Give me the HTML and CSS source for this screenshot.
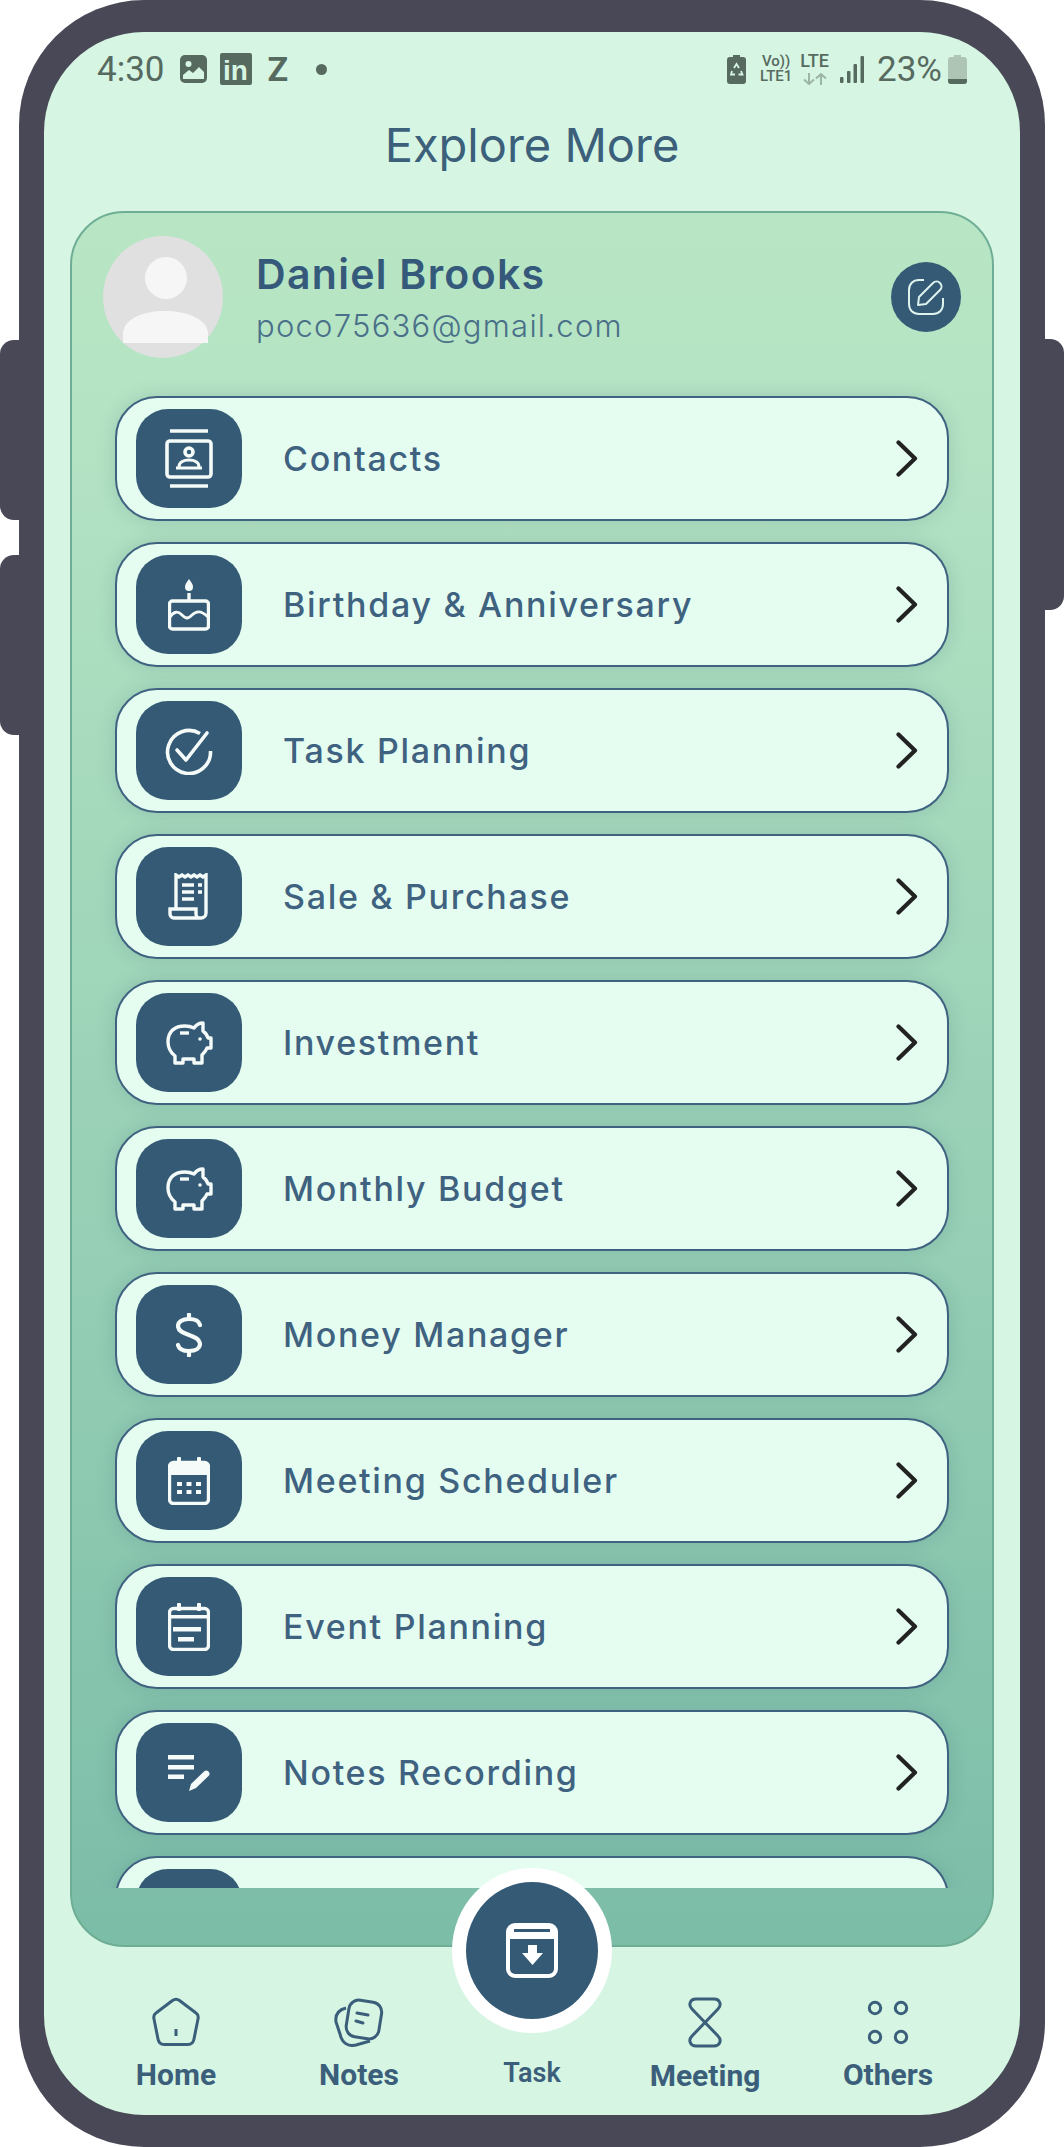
FILE: index.html
```html
<!DOCTYPE html>
<html>
<head>
    <title>Explore More</title>
    <meta charset="utf-8">
    <link rel="stylesheet" href="styles.css">
</head>
<body>
<div class="device">
    <span class="side-btn left-one"></span>
    <span class="side-btn left-two"></span>
    <span class="side-btn right-one"></span>

    <div class="screen">
        <div class="status">
            <div class="status-group">
                <span class="clock">4:30</span>
                <svg class="st-image" width="27" height="28" viewBox="0 0 27 28"><rect width="27" height="28" rx="5" fill="#566a5f"/><circle cx="8.5" cy="9" r="3" fill="#d6f5e3"/><path d="M3 24v-4l6-5 4 3 6-6 5 5v7z" fill="#d6f5e3"/></svg>
                <span class="st-linkedin">in</span>
                <span class="st-z">Z</span>
                <span class="st-dot"></span>
            </div>
            <div class="status-group">
                <svg class="st-battery-saver" width="19" height="29" viewBox="0 0 19 29"><path d="M6 0h7v2h3a3 3 0 0 1 3 3v21a3 3 0 0 1-3 3H3a3 3 0 0 1-3-3V5a3 3 0 0 1 3-3h3z" fill="#566a5f"/><path d="M7 13l2.500-4 2.500 4M14 16l1.500 3.500h-4M5 16l-1 3.500h4" stroke="#d6f5e3" stroke-width="1.800" fill="none"/></svg>
                <div class="st-stack volte"><span>Vo))</span><span>LTE1</span></div>
                <div class="st-stack lte">
                    <span>LTE</span>
                    <svg class="st-arrows" width="26" height="12" viewBox="0 0 26 12" fill="none" stroke="#9db5a7" stroke-width="2"><path d="M7 0V11M2 6.500L7 11L12 6.500M19 12V1M14 5.500L19 1L24 5.500"/></svg>
                </div>
                <svg class="st-signal" width="24" height="27" viewBox="0 0 24 27"><rect x="0" y="21" width="3.500" height="6" rx="1" fill="#566a5f"/><rect x="7" y="15" width="3.500" height="12" rx="1" fill="#566a5f"/><rect x="13.500" y="8" width="3.500" height="19" rx="1" fill="#566a5f"/><rect x="20.500" y="0" width="3.500" height="27" rx="1" fill="#566a5f"/></svg>
                <span class="percent">23%</span>
                <svg class="st-battery" width="19" height="29" viewBox="0 0 19 29"><path d="M6 0h7v2h3a3 3 0 0 1 3 3v21a3 3 0 0 1-3 3H3a3 3 0 0 1-3-3V5a3 3 0 0 1 3-3h3z" fill="#aec5b5"/><path d="M0 24h19v2a3 3 0 0 1-3 3H3a3 3 0 0 1-3-3z" fill="#566a5f"/></svg>
            </div>
        </div>

        <h1 class="title">Explore More</h1>

        <div class="card">
            <div class="profile">
                <svg class="avatar" width="120" height="122" viewBox="0 0 120 122">
                    <ellipse cx="60" cy="61" rx="60" ry="61" fill="#e0e0e0"/>
                    <circle cx="63" cy="42" r="21" fill="#f6f6f6"/>
                    <path d="M20 107V98C20 83 40 75 62 75S105 83 105 98V107Z" fill="#f6f6f6"/>
                </svg>
                <div class="profile-text">
                    <div class="name">Daniel Brooks</div>
                    <div class="email">poco75636@gmail.com</div>
                </div>
                <div class="edit-btn">
                    <svg width="38" height="38" viewBox="0 0 38 38" fill="none" stroke="#dff3ee" stroke-width="2"><path d="M17 2H12C6 2 2 6 2 12V26C2 32 6 36 12 36H26C32 36 36 32 36 26V20"/><path d="M11 27L12 19L26 5C28 3 31 3 33 5C35 7 35 10 33 12L19 26Z" stroke-linejoin="round"/></svg>
                </div>
            </div>

            <div class="menu">
                <div class="row">
                    <div class="row-icon">
                        <svg width="48" height="60" viewBox="0 0 48 60" fill="none" stroke="#f4fbf8" stroke-width="3.600"><path d="M5 2H43M5 57H43"/><rect x="2" y="12" width="44" height="36" rx="3"/><circle cx="24" cy="23" r="4"/><path d="M11 39H37M14 38C14 33 19 31 24 31S34 33 34 38" stroke-width="3"/></svg>
                    </div>
                    <span class="row-label">Contacts</span>
                    <svg class="chev" width="22" height="37" viewBox="0 0 22 37"><path d="M2.500 2.500L19 18.500L2.500 34.500" fill="none" stroke="#222" stroke-width="4.200" stroke-linecap="round" stroke-linejoin="round"/></svg>
                </div>
                <div class="row">
                    <div class="row-icon">
                        <svg width="42" height="52" viewBox="0 0 42 52" fill="none" stroke="#f4fbf8" stroke-width="3.400"><path d="M21 0C18 4 17 6 17 8A4 4 0 0 0 25 8C25 6 24 4 21 0Z" fill="#f4fbf8" stroke="none"/><path d="M21 14V22"/><rect x="1.500" y="22" width="39" height="28" rx="3"/><path d="M2 38C6 32 10 32 14 36S20 40 24 36S33 31 40 38" stroke-width="2.800"/></svg>
                    </div>
                    <span class="row-label">Birthday &amp; Anniversary</span>
                    <svg class="chev" width="22" height="37" viewBox="0 0 22 37"><path d="M2.500 2.500L19 18.500L2.500 34.500" fill="none" stroke="#222" stroke-width="4.200" stroke-linecap="round" stroke-linejoin="round"/></svg>
                </div>
                <div class="row">
                    <div class="row-icon">
                        <svg width="48" height="48" viewBox="0 0 48 48" fill="none" stroke="#f4fbf8" stroke-width="3.600"><path d="M35 6.500A21.500 21.500 0 1 0 45.500 24"/><path d="M12 23L21 33L42 6" stroke-linecap="round" stroke-linejoin="round"/></svg>
                    </div>
                    <span class="row-label">Task Planning</span>
                    <svg class="chev" width="22" height="37" viewBox="0 0 22 37"><path d="M2.500 2.500L19 18.500L2.500 34.500" fill="none" stroke="#222" stroke-width="4.200" stroke-linecap="round" stroke-linejoin="round"/></svg>
                </div>
                <div class="row">
                    <div class="row-icon">
                        <svg width="42" height="48" viewBox="0 0 42 48" fill="none" stroke="#f4fbf8" stroke-width="3.400"><path d="M8 35V2L11 4L14 2L17 4L20 2L23 4L26 2L29 4L32 2L35 4L38 2V40A5 5 0 0 1 33 45H6A4 4 0 0 1 2 41V36H28V41A4 4 0 0 0 33 45"/><path d="M14 12H26M14 19H26M14 26H26"/><path d="M30 12H34M30 19H34" stroke-dasharray="4 3"/></svg>
                    </div>
                    <span class="row-label">Sale &amp; Purchase</span>
                    <svg class="chev" width="22" height="37" viewBox="0 0 22 37"><path d="M2.500 2.500L19 18.500L2.500 34.500" fill="none" stroke="#222" stroke-width="4.200" stroke-linecap="round" stroke-linejoin="round"/></svg>
                </div>
                <div class="row">
                    <div class="row-icon">
                        <svg width="48" height="46" viewBox="0 0 48 46" fill="none" stroke="#f4fbf8" stroke-width="3.400" stroke-linejoin="round"><path d="M3 22C3 11 10 6 20 6C24 6 27 7 29 8C31 5 35 3 38 3V11C41 13 42 15 43 18H46V28H42C41 31 39 33 37 35V43H29V39H18V43H10V36C5 32 3 28 3 22Z"/><path d="M15 13H24"/><circle cx="35" cy="19" r="1.800" fill="#f4fbf8" stroke="none"/></svg>
                    </div>
                    <span class="row-label">Investment</span>
                    <svg class="chev" width="22" height="37" viewBox="0 0 22 37"><path d="M2.500 2.500L19 18.500L2.500 34.500" fill="none" stroke="#222" stroke-width="4.200" stroke-linecap="round" stroke-linejoin="round"/></svg>
                </div>
                <div class="row">
                    <div class="row-icon">
                        <svg width="48" height="46" viewBox="0 0 48 46" fill="none" stroke="#f4fbf8" stroke-width="3.400" stroke-linejoin="round"><path d="M3 22C3 11 10 6 20 6C24 6 27 7 29 8C31 5 35 3 38 3V11C41 13 42 15 43 18H46V28H42C41 31 39 33 37 35V43H29V39H18V43H10V36C5 32 3 28 3 22Z"/><path d="M15 13H24"/><circle cx="35" cy="19" r="1.800" fill="#f4fbf8" stroke="none"/></svg>
                    </div>
                    <span class="row-label">Monthly Budget</span>
                    <svg class="chev" width="22" height="37" viewBox="0 0 22 37"><path d="M2.500 2.500L19 18.500L2.500 34.500" fill="none" stroke="#222" stroke-width="4.200" stroke-linecap="round" stroke-linejoin="round"/></svg>
                </div>
                <div class="row">
                    <div class="row-icon">
                        <svg width="26" height="44" viewBox="0 0 26 44" fill="none" stroke="#f4fbf8" stroke-width="4.200" stroke-linecap="round"><path d="M13 1.500V6M13 38V42.500"/><path d="M24 12C23 8 19 6 13 6C6 6 2 9 2 13C2 18 7 20 13 22C19 24 24 26 24 31C24 35 20 38 13 38C7 38 3 36 2 32"/></svg>
                    </div>
                    <span class="row-label">Money Manager</span>
                    <svg class="chev" width="22" height="37" viewBox="0 0 22 37"><path d="M2.500 2.500L19 18.500L2.500 34.500" fill="none" stroke="#222" stroke-width="4.200" stroke-linecap="round" stroke-linejoin="round"/></svg>
                </div>
                <div class="row">
                    <div class="row-icon">
                        <svg width="42" height="48" viewBox="0 0 42 48" fill="#f4fbf8"><rect x="9" y="0" width="4" height="8" rx="1"/><rect x="29" y="0" width="4" height="8" rx="1"/><rect x="1.500" y="5.500" width="39" height="41" rx="4" fill="none" stroke="#f4fbf8" stroke-width="3.400"/><rect x="2" y="6" width="38" height="12"/><rect x="9" y="25" width="5" height="4"/><rect x="18.500" y="25" width="5" height="4"/><rect x="28" y="25" width="5" height="4"/><rect x="9" y="33" width="5" height="4"/><rect x="18.500" y="33" width="5" height="4"/><rect x="28" y="33" width="5" height="4"/></svg>
                    </div>
                    <span class="row-label">Meeting Scheduler</span>
                    <svg class="chev" width="22" height="37" viewBox="0 0 22 37"><path d="M2.500 2.500L19 18.500L2.500 34.500" fill="none" stroke="#222" stroke-width="4.200" stroke-linecap="round" stroke-linejoin="round"/></svg>
                </div>
                <div class="row">
                    <div class="row-icon">
                        <svg width="42" height="48" viewBox="0 0 42 48" fill="#f4fbf8"><rect x="9" y="0" width="4" height="8" rx="1"/><rect x="29" y="0" width="4" height="8" rx="1"/><rect x="1.500" y="5.500" width="39" height="41" rx="4" fill="none" stroke="#f4fbf8" stroke-width="3.400"/><rect x="2" y="12" width="38" height="3.500"/><rect x="5" y="24" width="28" height="4.500"/><rect x="10" y="34" width="16" height="4.500"/></svg>
                    </div>
                    <span class="row-label">Event Planning</span>
                    <svg class="chev" width="22" height="37" viewBox="0 0 22 37"><path d="M2.500 2.500L19 18.500L2.500 34.500" fill="none" stroke="#222" stroke-width="4.200" stroke-linecap="round" stroke-linejoin="round"/></svg>
                </div>
                <div class="row">
                    <div class="row-icon">
                        <svg width="44" height="38" viewBox="0 0 44 38" fill="#f4fbf8"><rect x="1" y="1" width="26" height="4.500"/><rect x="1" y="11" width="26" height="4.500"/><rect x="1" y="20.500" width="16" height="4.500"/><path d="M22 37L24 30L37 17.500C38.500 16 40 16 41.500 17.500C43 19 43 20.500 41.500 22L29 34Z"/></svg>
                    </div>
                    <span class="row-label">Notes Recording</span>
                    <svg class="chev" width="22" height="37" viewBox="0 0 22 37"><path d="M2.500 2.500L19 18.500L2.500 34.500" fill="none" stroke="#222" stroke-width="4.200" stroke-linecap="round" stroke-linejoin="round"/></svg>
                </div>
                <div class="row">
                    <div class="row-icon"></div>
                </div>
            </div>
        </div>

        <div class="nav">
            <div class="nav-item">
                <svg width="50" height="50" viewBox="0 0 50 50" fill="none" stroke="#3b5f7a" stroke-width="3"><path d="M21.500 3.500Q25 1 28.500 3.500L45 16Q48 18 47 22L43 42Q42 47.500 37 47.500H13Q8 47.500 7 42L3 22Q2 18 5 16Z"/><path d="M25 32V39"/></svg>
                <span>Home</span>
            </div>
            <div class="nav-item">
                <svg width="50" height="50" viewBox="0 0 50 50" fill="none" stroke="#3b5f7a" stroke-width="3"><rect x="13.500" y="4" width="33" height="37" rx="10" transform="rotate(9 30 22)"/><path d="M12 11C4 13 1 18 2 25L6 37C8 46 14 50 22 48L36 44"/><path d="M23 16L34 18M22 24L29 26" stroke-linecap="round"/></svg>
                <span>Notes</span>
            </div>
            <div class="nav-item nav-task">
                <div class="fab">
                    <svg width="52" height="55" viewBox="0 0 52 55"><rect x="2" y="2" width="48" height="51" rx="7" fill="none" stroke="#fff" stroke-width="4"/><rect x="2" y="4" width="48" height="12" fill="#fff"/><rect x="8" y="6" width="36" height="3" fill="#355a76"/><path d="M22 22H31V30H37L26.500 42L16 30H22Z" fill="#fff"/></svg>
                </div>
                <span>Task</span>
            </div>
            <div class="nav-item">
                <svg width="34" height="51" viewBox="0 0 34 51" fill="none" stroke="#3b5f7a" stroke-width="3"><path d="M8 2H26C32 2 34 8 30 12L4 39C0 43 2 49 8 49H26C32 49 34 43 30 39L4 12C0 8 2 2 8 2Z"/></svg>
                <span>Meeting</span>
            </div>
            <div class="nav-item">
                <svg width="50" height="50" viewBox="0 0 50 50" fill="none" stroke="#3b5f7a" stroke-width="3"><circle cx="12" cy="11" r="5.700"/><circle cx="38" cy="11" r="5.700"/><circle cx="12" cy="40" r="5.700"/><circle cx="38" cy="40" r="5.700"/></svg>
                <span>Others</span>
            </div>
        </div>
    </div>
</div>
</body>
</html>
```

FILE: styles.css
```css
html, body {
    margin: 0;
    padding: 0;
    background: #fff;
}
body {
    width: 1064px;
    height: 2147px;
    overflow: hidden;
    font-family: "Inter", "Liberation Sans", sans-serif;
}

.device {
    position: relative;
    box-sizing: border-box;
    width: 1026px;
    height: 2147px;
    margin-left: 19px;
    padding: 32px 25px;
    background: #494857;
    border-radius: 125px;
}
.side-btn {
    position: absolute;
    width: 30px;
    background: #494857;
}
.left-one {
    left: -19px;
    top: 340px;
    height: 180px;
    border-radius: 14px 0 0 14px;
}
.left-two {
    left: -19px;
    top: 555px;
    height: 180px;
    border-radius: 14px 0 0 14px;
}
.right-one {
    right: -19px;
    top: 339px;
    height: 271px;
    border-radius: 0 14px 14px 0;
}

.screen {
    display: flex;
    flex-direction: column;
    height: 2083px;
    background: #d6f5e3;
    border-radius: 100px;
    overflow: hidden;
}

/* status bar */
.status {
    display: flex;
    justify-content: space-between;
    height: 36px;
    margin-top: 19px;
    padding: 0 53px;
    color: #566a5f;
    font-family: "Roboto", sans-serif;
}
.status-group {
    display: flex;
    align-items: center;
}
.clock {
    font-size: 35px;
    margin-right: 15px;
}
.st-linkedin {
    width: 32px;
    height: 32px;
    margin-left: 13px;
    background: #566a5f;
    color: #d6f5e3;
    font: bold 28px/36px "Liberation Sans", sans-serif;
    text-align: center;
    border-radius: 2px;
}
.st-z {
    margin-left: 16px;
    font-size: 34px;
    font-weight: 700;
}
.st-dot {
    width: 11px;
    height: 11px;
    margin-left: 28px;
    background: #566a5f;
    border-radius: 50%;
}
.st-stack {
    display: flex;
    flex-direction: column;
    align-items: center;
    font-size: 15px;
    font-weight: 500;
    line-height: 15px;
}
.volte {
    margin-left: 14px;
}
.lte {
    gap: 4px;
    margin-left: 8px;
    font-size: 18px;
    line-height: 16px;
}
.st-signal {
    margin-left: 11px;
}
.percent {
    margin-left: 13px;
    margin-right: 6px;
    font-size: 35px;
}

.title {
    margin: 28px 0 36px;
    color: #3c5f7a;
    font-size: 47px;
    font-weight: 400;
    line-height: 60px;
    text-align: center;
}

/* main card */
.card {
    box-sizing: border-box;
    display: flex;
    flex-direction: column;
    flex: none;
    width: 924px;
    height: 1736px;
    margin-left: 26px;
    padding-top: 23px;
    padding-bottom: 57px;
    background: linear-gradient(#b8e6c4, #b5e4c4 10%, #7cbda8);
    border: 2px solid #6fae96;
    border-radius: 54px;
}
.profile {
    display: flex;
    align-items: center;
    padding: 0 31px;
}
.avatar {
    flex: none;
}
.profile-text {
    margin-left: 33px;
}
.name {
    color: #35597a;
    font-size: 41px;
    font-weight: 600;
    line-height: 50px;
    letter-spacing: 1.3px;
}
.email {
    margin-top: 7px;
    color: #4a7089;
    font-size: 31px;
    font-weight: 300;
    line-height: 40px;
    letter-spacing: 1.25px;
}
.edit-btn {
    display: flex;
    align-items: center;
    justify-content: center;
    width: 70px;
    height: 70px;
    margin-left: auto;
    background: #355a76;
    border-radius: 50%;
}

.menu {
    display: flex;
    flex: 1;
    flex-direction: column;
    gap: 21px;
    margin-top: 19px;
    padding: 19px 43px 0;
    overflow: hidden;
}
.row {
    box-sizing: border-box;
    display: flex;
    flex: none;
    align-items: center;
    height: 125px;
    padding: 0 29px 0 19px;
    background: #e5fdf0;
    border: 2px solid #3f6280;
    border-radius: 42px;
    box-shadow: 0 0 18px rgba(50, 90, 110, 0.18);
}
.row-icon {
    display: flex;
    flex: none;
    align-items: center;
    justify-content: center;
    width: 106px;
    height: 99px;
    background: #355a76;
    border-radius: 32px;
}
.row-label {
    margin-left: 41px;
    color: #3f6280;
    font-size: 34px;
    font-weight: 500;
    letter-spacing: 1.7px;
}
.chev {
    margin-left: auto;
}

/* bottom nav */
.nav {
    display: grid;
    grid-template-columns: 180px 186px 160px 186px 180px;
    padding: 50px 0 0 42px;
}
.nav-item {
    display: flex;
    flex-direction: column;
    align-items: center;
    color: #3b5f7a;
    font-family: "Roboto", sans-serif;
    font-size: 30px;
    font-weight: 700;
    line-height: 36px;
}
.nav-item svg {
    flex: none;
}
.nav-item > span {
    margin-top: 10px;
}
.nav-task {
    margin-top: -129px;
    font-size: 27px;
    font-weight: 600;
    line-height: 34px;
}
.nav-task > span {
    margin-top: 23px;
}
.fab {
    box-sizing: border-box;
    display: flex;
    align-items: center;
    justify-content: center;
    width: 160px;
    height: 165px;
    background: #355a76;
    border: 14px solid #fff;
    border-radius: 50%;
}
```
